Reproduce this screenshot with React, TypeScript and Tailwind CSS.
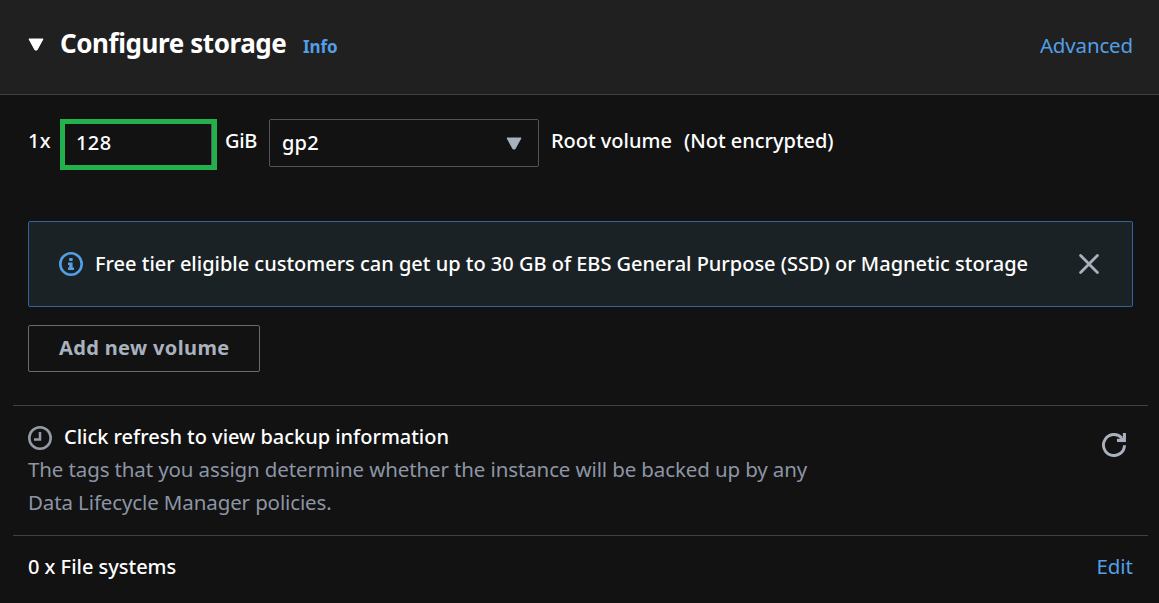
import React from 'react';

function Caret({ className }: { className: string }) {
  return (
    <svg viewBox="0 0 16 13" className={`h-[13px] w-4 shrink-0 ${className}`} fill="currentColor" stroke="currentColor" strokeWidth="1" strokeLinejoin="round">
      <path d="M1 1H15L9 12H7Z" />
    </svg>
  );
}

function Header() {
  return (
    <header className="flex h-[95px] items-start justify-between border-b border-[#414141] bg-[#202020] pl-7 pr-[26px] pt-[25px]">
      <div className="flex items-start">
        <Caret className="mr-4 mt-[13px] text-white" />
        <h2 className="w-[243px] text-[26px] font-bold leading-9 tracking-[-0.42px]">Configure storage</h2>
        <a className="mt-1 text-[17px] font-bold leading-9 tracking-[-0.1px] text-[#539fe5]">Info</a>
      </div>
      <a className="mt-[2px] text-[20.5px] font-normal leading-9 tracking-[-0.15px] text-[#539fe5]">Advanced</a>
    </header>
  );
}

function VolumeRow() {
  return (
    <div className="flex h-[51px] items-start">
      <span className="w-8 leading-[44px] tracking-[0.3px]">1x</span>
      <div className="h-[51px] w-[157px] border-[5px] border-[#22b14c] pl-[11px]">
        <div className="h-full border-r border-[#545b64] leading-[38px] tracking-[0.4px]">128</div>
      </div>
      <span className="ml-2 w-11 leading-[44px] tracking-[-0.3px]">GiB</span>
      <div className="flex h-12 w-[270px] items-center justify-between rounded-[2px] border border-[#545359] pl-3 pr-4">
        <span className="leading-[46px] tracking-[0.2px]">gp2</span>
        <Caret className="text-[#a9b1be]" />
      </div>
      <span className="ml-3 w-[133px] leading-[44px]">Root volume</span>
      <span className="leading-[44px]">(Not encrypted)</span>
    </div>
  );
}

function Notice() {
  return (
    <div className="mt-[51px] flex h-[86px] items-center rounded-[2px] border border-[#30659c] bg-[#1b2225] pl-[30px] pr-[33px]">
      <svg viewBox="0 0 24 24" className="h-6 w-6 shrink-0 text-[#539fe5]" fill="none" stroke="currentColor">
        <circle cx="12" cy="12" r="10.7" strokeWidth="2.6" />
        <path d="M10.2 6H13.6V9H10.2ZM9 10.5H13.6V15.5H15V18H9V15.5H10.2V13H9Z" fill="currentColor" stroke="none" />
      </svg>
      <p className="mb-[2px] ml-3 grow whitespace-nowrap leading-[33px] tracking-[-0.01px]">
        Free tier eligible customers can get up to 30 GB of EBS General Purpose (SSD) or Magnetic storage
      </p>
      <svg viewBox="0 0 20 20" className="h-5 w-5 shrink-0 text-[#a9b1be]" fill="none" stroke="currentColor" strokeWidth="2.8" strokeLinecap="round">
        <path d="M1.6 1.6L18.4 18.4M18.4 1.6L1.6 18.4" />
      </svg>
    </div>
  );
}

function Backup() {
  return (
    <section className="mx-[-15px] mt-[33px] flex h-[130px] items-start justify-between border-t border-[#414141] pl-[15px] pr-[22px] pt-[14px]">
      <div>
        <div className="flex h-[33px] items-center">
          <svg viewBox="0 0 24 24" className="mt-[2px] h-6 w-6 shrink-0 text-[#959ba5]" fill="none" stroke="currentColor">
            <circle cx="12" cy="12" r="10.7" strokeWidth="2.6" />
            <path d="M12 6V13.6H6" strokeWidth="2.5" />
          </svg>
          <span className="ml-3">Click refresh to view backup information</span>
        </div>
        <p className="whitespace-nowrap text-[20.5px] font-normal leading-[33px] tracking-[-0.12px] text-[#8d95a5]">
          The tags that you assign determine whether the instance will be backed up by any
          <br />
          Data Lifecycle Manager policies.
        </p>
      </div>
      <svg viewBox="0 0 24 24" className="mt-[13px] h-6 w-6 shrink-0 text-[#a9b1be]" fill="none" stroke="currentColor">
        <path d="M22.5 12.2A10.5 10.5 0 1 1 19.8 5" strokeWidth="2.9" />
        <path d="M22.4 0V7.4H15" strokeWidth="3.1" />
        <path d="M18 4L22 7" strokeWidth="2" />
      </svg>
    </section>
  );
}

export default function App() {
  return (
    <main className="h-[603px] w-[1159px] overflow-hidden bg-[#121212] font-['Noto_Sans',sans-serif] text-[20px] font-medium tracking-[-0.02px] text-white">
      <Header />
      <div className="px-7 pt-6">
        <div className="mr-[-2px]">
          <VolumeRow />
          <Notice />
          <button className="mt-[18px] block h-[47px] w-[232px] whitespace-nowrap rounded-[2px] border border-[#6a6b6f] pb-[2px] pl-[30px] text-left text-[20px] font-bold leading-[43px] tracking-[0.36px] text-[#a9b1be]">
            Add new volume
          </button>
          <Backup />
          <section className="mx-[-15px] flex justify-between border-t border-[#414141] px-[15px] pt-[14px] leading-[33px]">
            <span>0 x File systems</span>
            <a className="text-[20.5px] font-normal text-[#539fe5]">Edit</a>
          </section>
        </div>
      </div>
    </main>
  );
}
